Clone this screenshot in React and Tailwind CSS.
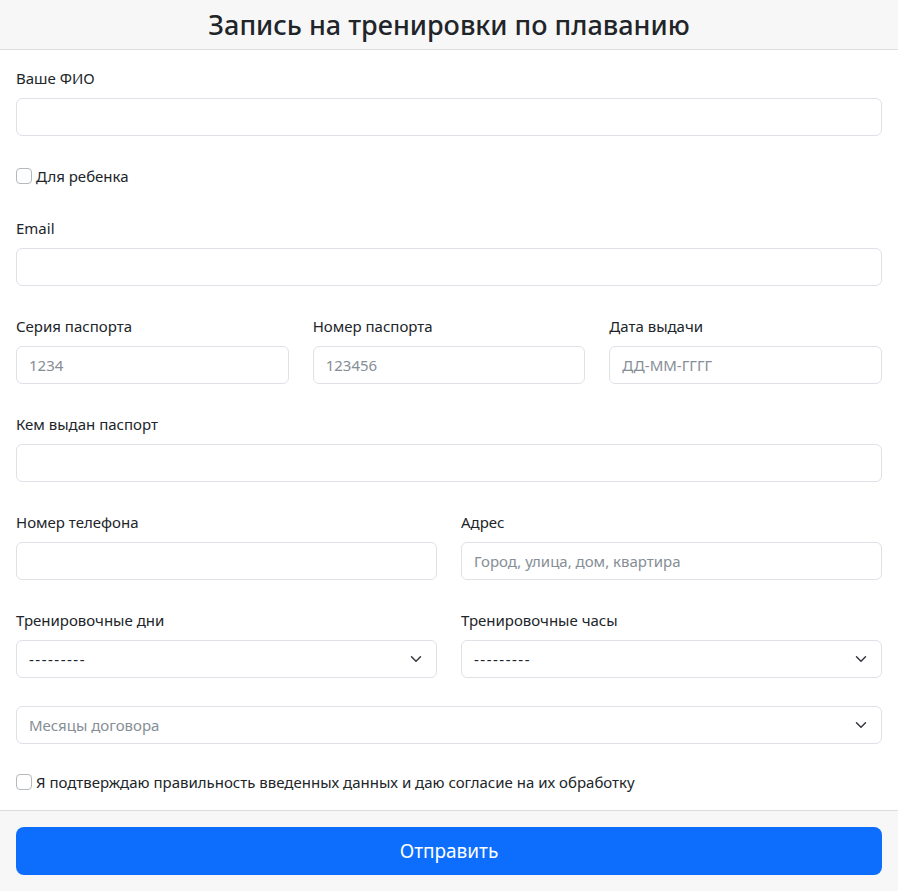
import React from 'react';

const Label = ({ children }) => (
  <label className="block mb-2 leading-6 text-[#212529]">{children}</label>
);

const TextInput = ({ placeholder }) => (
  <input
    type="text"
    placeholder={placeholder}
    className="block w-full h-[38px] px-3 border border-[#dee2e6] rounded-md bg-white text-[#212529] placeholder:text-[#868e96] outline-none"
  />
);

const Chevron = () => (
  <svg className="pointer-events-none absolute right-[15px] top-1/2 -translate-y-1/2" width="12" height="12" viewBox="0 0 16 16" fill="none">
    <path d="M2 5l6 6 6-6" stroke="#343a40" strokeWidth="2" strokeLinecap="round" strokeLinejoin="round" />
  </svg>
);

const Select = ({ value, muted, dashes }) => (
  <div className="relative">
    <div className={`flex items-center w-full h-[38px] px-3 border border-[#dee2e6] rounded-md bg-white ${muted ? 'text-[#868e96]' : 'text-[#212529]'} ${dashes ? 'tracking-[1.5px]' : ''}`}>
      {value}
    </div>
    <Chevron />
  </div>
);

const Check = ({ children }) => (
  <label className="flex items-center leading-6 text-[#212529]">
    <span className="inline-block w-4 h-4 mr-[4px] border border-[#b5b9bd] rounded-[4px] bg-white"></span>
    {children}
  </label>
);

export default function App() {
  return (
    <div className="min-h-screen bg-white text-[15px]" style={{ fontFamily: '"Noto Sans", "Open Sans", sans-serif' }}>
      <div className="bg-[#f7f7f7] border-b border-[#dcdcdc] px-4 py-2">
        <h3 className="text-center text-[27px] font-medium leading-[33px] text-[#212529]">Запись на тренировки по плаванию</h3>
      </div>

      <div className="p-4">
        <div className="mb-7">
          <Label>Ваше ФИО</Label>
          <TextInput />
        </div>
        <div className="mb-7">
          <Check>Для ребенка</Check>
        </div>
        <div className="mb-7">
          <Label>Email</Label>
          <TextInput />
        </div>
        <div className="grid grid-cols-3 gap-x-6 mb-7">
          <div>
            <Label>Серия паспорта</Label>
            <TextInput placeholder="1234" />
          </div>
          <div>
            <Label>Номер паспорта</Label>
            <TextInput placeholder="123456" />
          </div>
          <div>
            <Label>Дата выдачи</Label>
            <TextInput placeholder="ДД-ММ-ГГГГ" />
          </div>
        </div>
        <div className="mb-7">
          <Label>Кем выдан паспорт</Label>
          <TextInput />
        </div>
        <div className="grid grid-cols-2 gap-x-6 mb-7">
          <div>
            <Label>Номер телефона</Label>
            <TextInput />
          </div>
          <div>
            <Label>Адрес</Label>
            <TextInput placeholder="Город, улица, дом, квартира" />
          </div>
        </div>
        <div className="grid grid-cols-2 gap-x-6 mb-7">
          <div>
            <Label>Тренировочные дни</Label>
            <Select value="---------" dashes />
          </div>
          <div>
            <Label>Тренировочные часы</Label>
            <Select value="---------" dashes />
          </div>
        </div>
        <div className="mb-[26px]">
          <Select value="Месяцы договора" muted />
        </div>
        <Check>Я подтверждаю правильность введенных данных и даю согласие на их обработку</Check>
      </div>

      <div className="bg-[#f7f7f7] border-t border-[#dcdcdc] p-4">
        <button className="w-full h-12 rounded-lg bg-[#0d6efd] text-white text-[19px]">Отправить</button>
      </div>
    </div>
  );
}
